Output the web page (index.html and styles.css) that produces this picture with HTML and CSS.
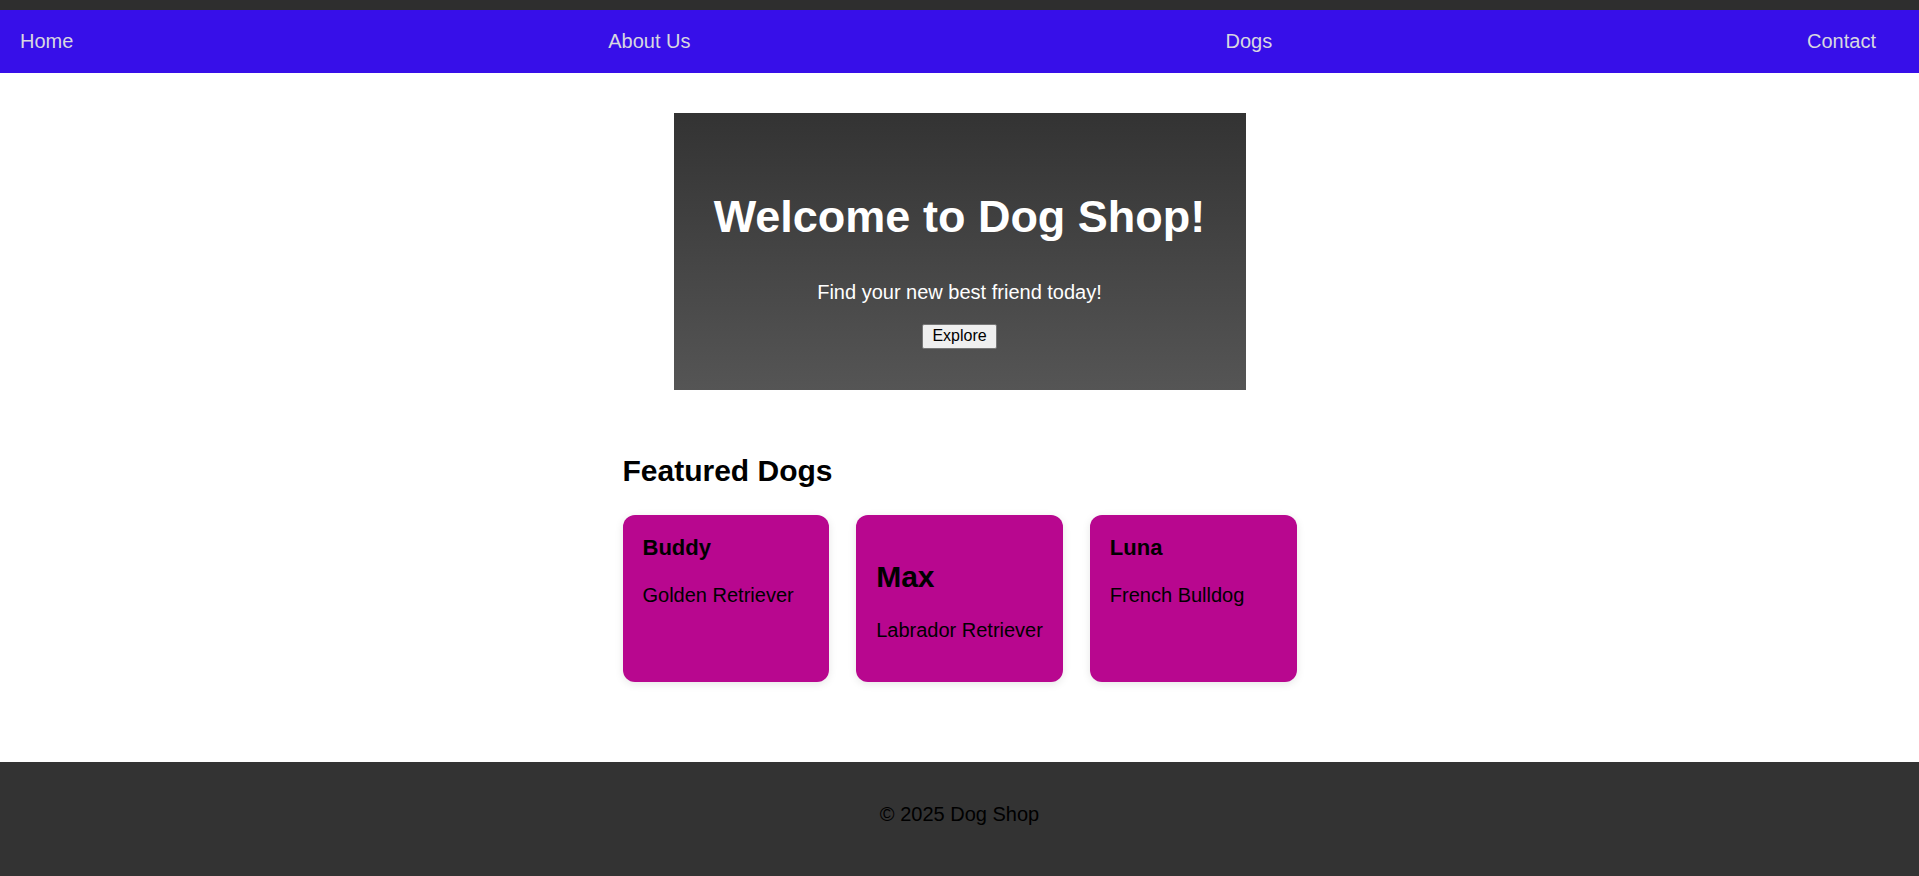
FILE: index.html
```html
<!DOCTYPE html>
<html lang="en">
<head>
<meta charset="utf-8">
<title>Dog Shop</title>
<link rel="stylesheet" href="styles.css">
</head>
<body>
<header class="site-header">
  <nav class="main-nav">
    <ul class="nav-list">
      <li><a class="nav-link" href="#">Home</a></li>
      <li><a class="nav-link" href="#">About Us</a></li>
      <li><a class="nav-link" href="#">Dogs</a></li>
      <li><a class="nav-link" href="#">Contact</a></li>
    </ul>
  </nav>
</header>
<main class="content">
  <section class="hero">
    <h1 class="hero-title">Welcome to Dog Shop!</h1>
    <p class="hero-text">Find your new best friend today!</p>
    <button class="hero-button" type="button">Explore</button>
  </section>
  <section class="featured">
    <h2 class="featured-title">Featured Dogs</h2>
    <div class="card-grid">
      <div class="card">
        <h3 class="card-name">Buddy</h3>
        <p class="card-breed">Golden Retriever</p>
      </div>
      <div class="card">
        <h2 class="card-name-large">Max</h2>
        <p class="card-breed">Labrador Retriever</p>
      </div>
      <div class="card">
        <h3 class="card-name">Luna</h3>
        <p class="card-breed">French Bulldog</p>
      </div>
    </div>
  </section>
</main>
<footer class="site-footer">
  <p class="footer-text">&copy; 2025 Dog Shop</p>
</footer>
</body>
</html>
```
FILE: styles.css
```css
* {
  box-sizing: border-box;
}

html, body {
  margin: 0;
  padding: 0;
}

body {
  font-family: Arial, "Liberation Sans", sans-serif;
  font-size: 20px;
  color: #000;
  background: #fff;
}

.site-header {
  background: #2e2e2e;
  padding-top: 10px;
}

.main-nav {
  background: #370fe9;
  height: 63px;
}

.nav-list {
  list-style: none;
  margin: 0;
  padding: 0 43px 0 20px;
  height: 100%;
  display: flex;
  justify-content: space-between;
  align-items: center;
}

.nav-link {
  color: #d8d8e0;
  text-decoration: none;
  font-size: 20px;
}

.content {
  display: flex;
  flex-direction: column;
  align-items: center;
}

.hero {
  margin-top: 40px;
  width: 572px;
  padding: 40px 20px 41px;
  background: linear-gradient(to bottom, #333333, #555555);
  text-align: center;
  color: #fff;
}

.hero-title {
  font-size: 45px;
  font-weight: bold;
  margin: 37.5px 0 38px;
  line-height: normal;
  white-space: nowrap;
}

.hero-text {
  font-size: 20px;
  margin: 0 0 19.5px;
}

.hero-button {
  font-family: Arial, "Liberation Sans", sans-serif;
  font-size: 16px;
  color: #000;
  background: #efefef;
  border: 1px solid #767676;
  border-radius: 2px;
  padding: 2px 9px;
  height: 25px;
  width: 75px;
  line-height: normal;
}

.featured {
  width: 674px;
  margin-top: 37px;
  margin-bottom: 80px;
}

.featured-title {
  font-size: 30px;
  margin: 27.5px 0 27px;
}

.card-grid {
  display: grid;
  grid-template-columns: repeat(3, 1fr);
  gap: 27px;
}

.card {
  background: #b8078f;
  border-radius: 12px;
  padding: 19.5px 16px 20px 20px;
  box-shadow: 0 2px 8px rgba(0, 0, 0, 0.1);
}

.card-name {
  font-size: 22px;
  margin: 0 0 23.5px;
}

.card-name-large {
  font-size: 30px;
  margin: 25px 0;
}

.card-breed {
  font-size: 20px;
  margin: 0 0 20px;
  white-space: nowrap;
}

.site-footer {
  background: #333333;
  height: 115px;
  padding-top: 41px;
  text-align: center;
}

.footer-text {
  margin: 0;
  color: #000;
  font-size: 20px;
}
```
